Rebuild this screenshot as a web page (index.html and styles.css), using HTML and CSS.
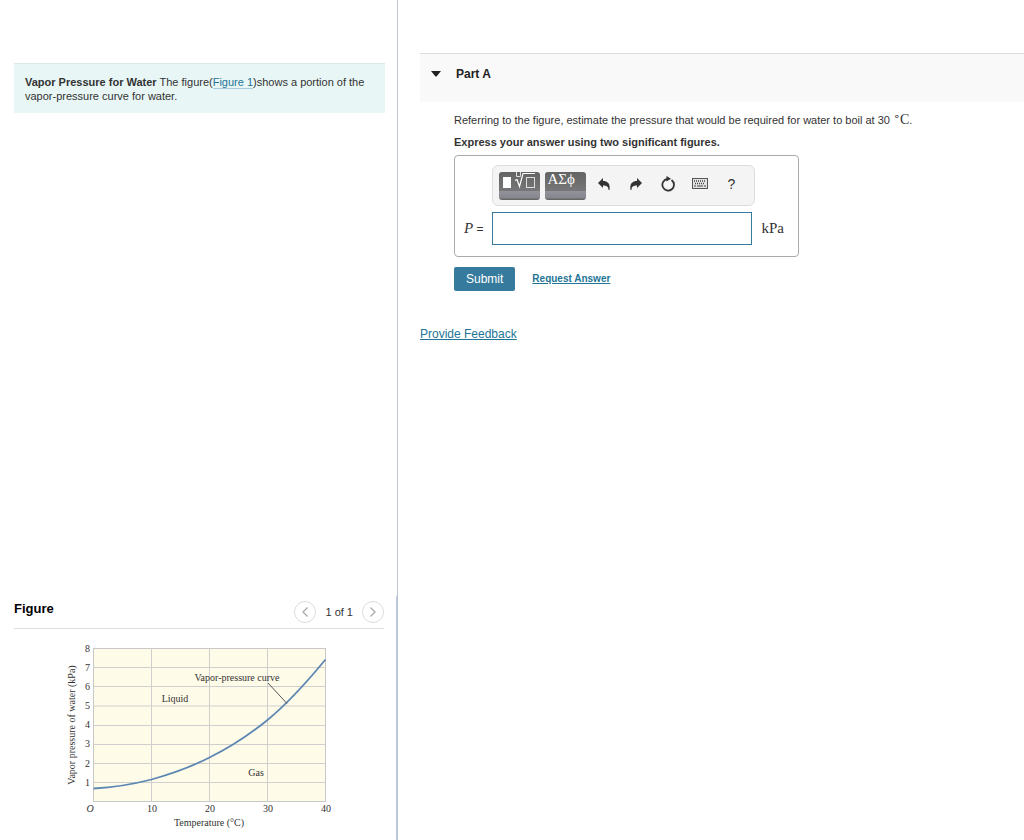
FILE: index.html
```html
<!DOCTYPE html>
<html lang="en">
<head>
    <meta charset="UTF-8">
    <meta name="viewport" content="width=device-width, initial-scale=1.0">
    <title>Vapor Pressure for Water</title>
    <link rel="stylesheet" href="styles.css">
</head>
<body>
    <aside class="side-pane">
        <div class="intro">
            <p><strong>Vapor Pressure for Water</strong> The figure(<a href="#figure">Figure 1</a>)shows a portion of the vapor-pressure curve for water.</p>
        </div>

        <section class="figure-pane" id="figure">
            <div class="figure-header">
                <h2>Figure</h2>
                <div class="pager">
                    <button class="pager-btn" type="button" aria-label="Previous figure">
                        <svg width="8" height="12" viewBox="0 0 8 12"><path d="M6.5 1.5 2 6l4.5 4.5"/></svg>
                    </button>
                    <span>1 of 1</span>
                    <button class="pager-btn" type="button" aria-label="Next figure">
                        <svg width="8" height="12" viewBox="0 0 8 12"><path d="M1.5 1.5 6 6l-4.5 4.5"/></svg>
                    </button>
                </div>
            </div>

            <svg class="chart" viewBox="0 0 370 200" role="img" aria-label="Vapor-pressure curve for water">
                <rect class="plot" x="79.5" y="8.5" width="232" height="153"/>
                <path class="grid" d="M79.5 27.5h232M79.5 46.5h232M79.5 66h232M79.5 85.5h232M79.5 104.5h232M79.5 123.5h232M79.5 142.5h232M137.5 8.5v153M195.5 8.5v153M253.5 8.5v153"/>
                <path class="curve" d="M79.5 148.500C99 147.500 118 144.500 137.500 139.500C157 134 176 127.500 195.500 117.500C216 107.500 235 95 253.500 80C274 63 293 42 311.500 19.500"/>
                <path class="pointer" d="M254 43l19 20.500"/>

                <!-- y axis -->
                <g text-anchor="end">
                    <text x="76" y="12">8</text>
                    <text x="76" y="31">7</text>
                    <text x="76" y="50">6</text>
                    <text x="76" y="69">5</text>
                    <text x="76" y="88">4</text>
                    <text x="76" y="107">3</text>
                    <text x="76" y="127">2</text>
                    <text x="76" y="146">1</text>
                </g>

                <!-- x axis -->
                <g text-anchor="middle">
                    <text class="origin" x="76" y="172">O</text>
                    <text x="138" y="172">10</text>
                    <text x="196" y="172">20</text>
                    <text x="254" y="172">30</text>
                    <text x="312" y="172">40</text>
                    <text x="195" y="186">Temperature (°C)</text>
                    <text transform="translate(61 85) rotate(-90)">Vapor pressure of water (kPa)</text>
                    <text x="223" y="41">Vapor-pressure curve</text>
                    <text x="161" y="62">Liquid</text>
                    <text x="242" y="136">Gas</text>
                </g>
            </svg>
        </section>
    </aside>

    <main class="main-pane">
        <div class="part-header">
            <svg width="10" height="6" viewBox="0 0 10 6"><path d="M0 0h10L5.500 5.500h-1z" fill="#222"/></svg>
            <h2>Part A</h2>
        </div>

        <form class="part-body">
            <p class="question">Referring to the figure, estimate the pressure that would be required for water to boil at 30 <span class="unit"><span class="degree">∘</span>C</span>.</p>
            <p class="instruction">Express your answer using two significant figures.</p>

            <div class="answer-box">
                <div class="toolbar">
                    <div class="palettes">
                        <button class="palette" type="button" aria-label="Templates">
                            <svg width="41" height="28" viewBox="0 0 41 28">
                                <rect x="4" y="5" width="8" height="11" fill="#fff"/>
                                <path d="M16 8.500l2-1 2.500 7L24 1.500H36" fill="none" stroke="#fff" stroke-width="1.200"/>
                                <path d="M17.500 0v4.500h4V0" fill="none" stroke="#ddd"/>
                                <rect x="27.500" y="5.500" width="8" height="10" fill="none" stroke="#ddd"/>
                            </svg>
                        </button>
                        <button class="palette symbols" type="button">ΑΣϕ</button>
                    </div>
                    <button class="tool" type="button" aria-label="Undo">
                        <svg width="14" height="14" viewBox="0 0 14 14"><path d="M6 1v3c4.500 0 7.500 2.500 6.500 9h-1C11.500 9.500 9.500 8.500 6 8.500V11L1 6z"/></svg>
                    </button>
                    <button class="tool" type="button" aria-label="Redo">
                        <svg width="14" height="14" viewBox="0 0 14 14"><path d="M8 1v3c-4.500 0-7.500 2.500-6.500 9h1C2.500 9.500 4.500 8.500 8 8.500V11l5-5z"/></svg>
                    </button>
                    <button class="tool" type="button" aria-label="Reset">
                        <svg width="16" height="16" viewBox="0 0 16 16"><path d="M11.500 4A5.800 5.800 0 1 1 7.500 3" fill="none" stroke="#333" stroke-width="1.800"/><path d="M6.500 0l4.500 2.800-4.500 2.700z"/></svg>
                    </button>
                    <button class="tool" type="button" aria-label="Keyboard shortcuts">
                        <svg width="16" height="11" viewBox="0 0 16 11">
                            <rect x="0.500" y="0.500" width="15" height="10" fill="#e4e4e4" stroke="#555"/>
                            <path d="M2 3h12M3 5.500h10" fill="none" stroke="#444" stroke-width="1.300" stroke-dasharray="1 1"/>
                            <path d="M2 8h2M5 8h6M12 8h2" fill="none" stroke="#444"/>
                        </svg>
                    </button>
                    <button class="tool help" type="button" aria-label="Help">?</button>
                </div>
                <label class="symbol" for="answer"><i>P</i> =</label>
                <input class="answer" id="answer" type="text">
                <span class="suffix">kPa</span>
            </div>

            <div class="actions">
                <button class="submit" type="submit">Submit</button>
                <a class="request" href="#">Request Answer</a>
            </div>
        </form>

        <a class="feedback" href="#">Provide Feedback</a>
    </main>
</body>
</html>
```
FILE: styles.css
```css
:root {
    --link-color: #237596;
    --accent-color: #367b9d;
    --text-color: #333;
}

* {
    box-sizing: border-box;
}

body {
    margin: 0;
    min-height: 100vh;
    display: flex;
    font-family: "Liberation Sans", Arial, sans-serif;
    font-size: 11px;
    color: var(--text-color);
    background: white;
}

h2, p {
    margin: 0;
}

button {
    margin: 0;
    padding: 0;
    border: none;
    background: none;
    font-family: inherit;
    color: inherit;
    cursor: pointer;
}

a {
    color: var(--link-color);
}

/* Left side */
.side-pane {
    flex: 0 0 398px;
    display: flex;
    flex-direction: column;
    justify-content: space-between;
    padding-top: 63px;
    border-right: 1px solid #bcc5d0;
}

.intro {
    margin: 0 12px 0 14px;
    padding: 11px 11px 10px;
    border-top: 1px solid #dce6e5;
    background: #e8f6f6;
    line-height: 14px;
}

.intro a {
    text-decoration: none;
    border-bottom: 1px solid #a9cbdc;
}

.figure-pane {
    padding: 0 12px 0 14px;
    border-right: 1px solid #bccbe0;
}

.figure-header {
    display: flex;
    justify-content: space-between;
    align-items: flex-start;
    height: 33px;
    border-bottom: 1px solid #ddd;
}

.figure-header h2 {
    padding-top: 4px;
    font-size: 13px;
    line-height: 18px;
    color: black;
}

.pager {
    display: flex;
    align-items: center;
    gap: 9px;
    padding-top: 5px;
    font-size: 11px;
    line-height: 20px;
}

.pager-btn {
    width: 22px;
    height: 22px;
    display: flex;
    align-items: center;
    justify-content: center;
    border: 1px solid #ddd;
    border-radius: 50%;
}

.pager-btn path {
    fill: none;
    stroke: #aaa;
    stroke-width: 1.3;
}

.chart {
    display: block;
    width: 100%;
    margin-top: 11px;
    font-family: "Liberation Serif", "Times New Roman", serif;
    font-size: 10px;
    fill: #333;
}

.chart .plot {
    fill: #fefbe8;
    stroke: #c8c8c8;
}

.chart .grid {
    fill: none;
    stroke: #cfcfcf;
}

.chart .curve {
    fill: none;
    stroke: #5d87b3;
    stroke-width: 1.8;
}

.chart .pointer {
    stroke: #555;
}

.chart .origin {
    font-style: italic;
}

/* Right side */
.main-pane {
    flex: 1;
    min-width: 0;
    padding: 53px 0 0 22px;
}

.part-header {
    display: flex;
    align-items: center;
    gap: 15px;
    padding: 11px 11px 19px;
    border-top: 1px solid #ddd;
    background: #f9f9f9;
}

.part-header h2 {
    font-size: 12px;
    line-height: 18px;
    color: #222;
}

.part-body {
    padding: 8px 24px 0 34px;
}

.question,
.instruction {
    line-height: 20px;
}

.instruction {
    margin-top: 2px;
    font-weight: bold;
}

.unit {
    font-family: "Liberation Serif", "Times New Roman", serif;
    font-size: 14px;
    line-height: 1;
}

.degree {
    font-family: "DejaVu Sans", sans-serif;
    font-size: 11px;
    line-height: 1;
    vertical-align: 4px;
}

.answer-box {
    width: fit-content;
    display: grid;
    grid-template-columns: auto auto auto;
    align-items: center;
    row-gap: 6px;
    margin-top: 3px;
    padding: 9px 14px 11px 9px;
    border: 1px solid #aaa;
    border-radius: 4px;
}

.toolbar {
    grid-column: 2 / 4;
    justify-self: start;
    display: flex;
    align-items: flex-start;
    height: 41px;
    padding: 6px;
    border: 1px solid #ddd;
    border-radius: 6px;
    background: #f4f4f4;
}

.palettes {
    display: flex;
    gap: 5px;
    padding-right: 2px;
}

.palette {
    display: flex;
    width: 41px;
    height: 28px;
    overflow: hidden;
    border-radius: 3px;
    background: linear-gradient(#636363, #777 19px, #92929a 19px, #86868e 26px, #666 27px);
    color: white;
    font-family: "Liberation Serif", "Times New Roman", serif;
    font-size: 15px;
    line-height: 15px;
}

.symbols {
    padding-left: 3px;
}

.tool {
    width: 32px;
    height: 23px;
    display: flex;
    align-items: center;
    justify-content: center;
    fill: #333;
}

.help {
    font-size: 14px;
}

.symbol {
    padding-right: 8px;
    font-size: 12px;
}

.symbol i {
    font-family: "Liberation Serif", "Times New Roman", serif;
    font-size: 15px;
}

.answer {
    width: 260px;
    height: 33px;
    padding: 4px 8px;
    border: 1px solid var(--accent-color);
    border-radius: 0;
    font-size: 14px;
}

.suffix {
    padding-left: 10px;
    font-family: "Liberation Serif", "Times New Roman", serif;
    font-size: 15px;
}

.actions {
    display: flex;
    align-items: center;
    gap: 17px;
    margin-top: 10px;
}

.submit {
    height: 24px;
    padding: 0 12px;
    border-radius: 2px;
    background: var(--accent-color);
    color: white;
    font-size: 12px;
}

.request {
    font-size: 10px;
    line-height: 12px;
    font-weight: bold;
}

.feedback {
    display: inline-block;
    margin-top: 36px;
    font-size: 12px;
}
```
